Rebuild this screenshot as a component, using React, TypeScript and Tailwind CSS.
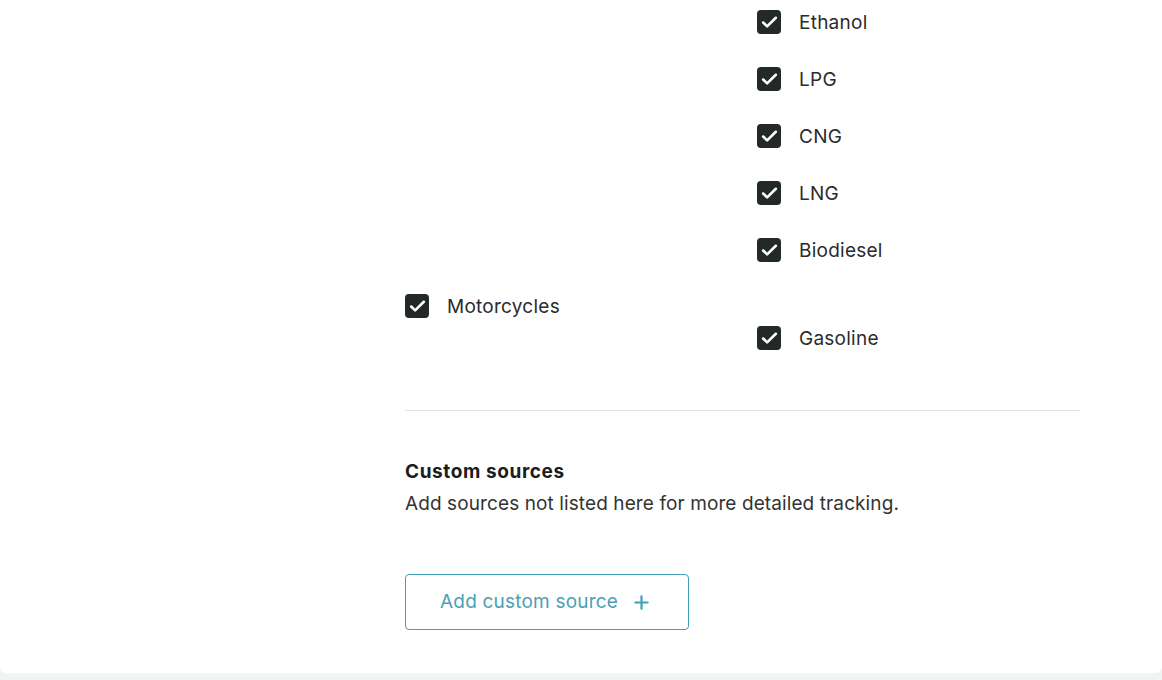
import { Check, Plus } from 'lucide-react'

const fuels = ['Ethanol', 'LPG', 'CNG', 'LNG', 'Biodiesel']

function CheckItem({ label }: { label: string }) {
  return (
    <label className="flex h-6 items-center gap-[18px] text-[19px] tracking-[0.25px] text-[#2b2b2b]">
      <span className="flex h-6 w-6 shrink-0 items-center justify-center rounded-[4px] bg-[#232829]">
        <Check size={19} strokeWidth={3.25} className="text-white" />
      </span>
      <span className="pt-px leading-6">{label}</span>
    </label>
  )
}

export default function App() {
  return (
    <div className="min-h-[680px] bg-[#f2f3f3] font-['Inter','Liberation_Sans',sans-serif]">
      <div className="rounded-b-md bg-white pb-[43px] pl-[405px] pr-[82px] pt-[10px]">
        {/* previous vehicle group, fuels only visible */}
        <div className="grid grid-cols-[352px_1fr]">
          <div />
          <div className="flex flex-col gap-[33px]">
            {fuels.map((f) => (
              <CheckItem key={f} label={f} />
            ))}
          </div>
        </div>

        <div className="mt-[32px] grid grid-cols-[352px_1fr]">
          <div>
            <CheckItem label="Motorcycles" />
          </div>
          <div className="mt-8 flex flex-col gap-[33px]">
            <CheckItem label="Gasoline" />
          </div>
        </div>

        <div className="mt-[60px] h-px bg-[#e3e3e3]" />

        <div className="mt-[49px]">
          <h3 className="text-[19px] font-bold leading-6 tracking-[0.6px] text-[#1c1c1c]">Custom sources</h3>
          <p className="mt-2 text-[19px] leading-6 tracking-[0.1px] text-[#333333]">
            Add sources not listed here for more detailed tracking.
          </p>
        </div>

        <button
          type="button"
          className="mt-[58px] flex h-14 w-[284px] items-center gap-[13px] rounded-[4px] border border-[#3f9fb5] pl-[34px] text-[19px] tracking-[0.2px] text-[#4b9fb5]"
        >
          Add custom source
          <Plus size={21} strokeWidth={2.5} className="text-[#3f9fb5]" />
        </button>
      </div>
    </div>
  )
}
